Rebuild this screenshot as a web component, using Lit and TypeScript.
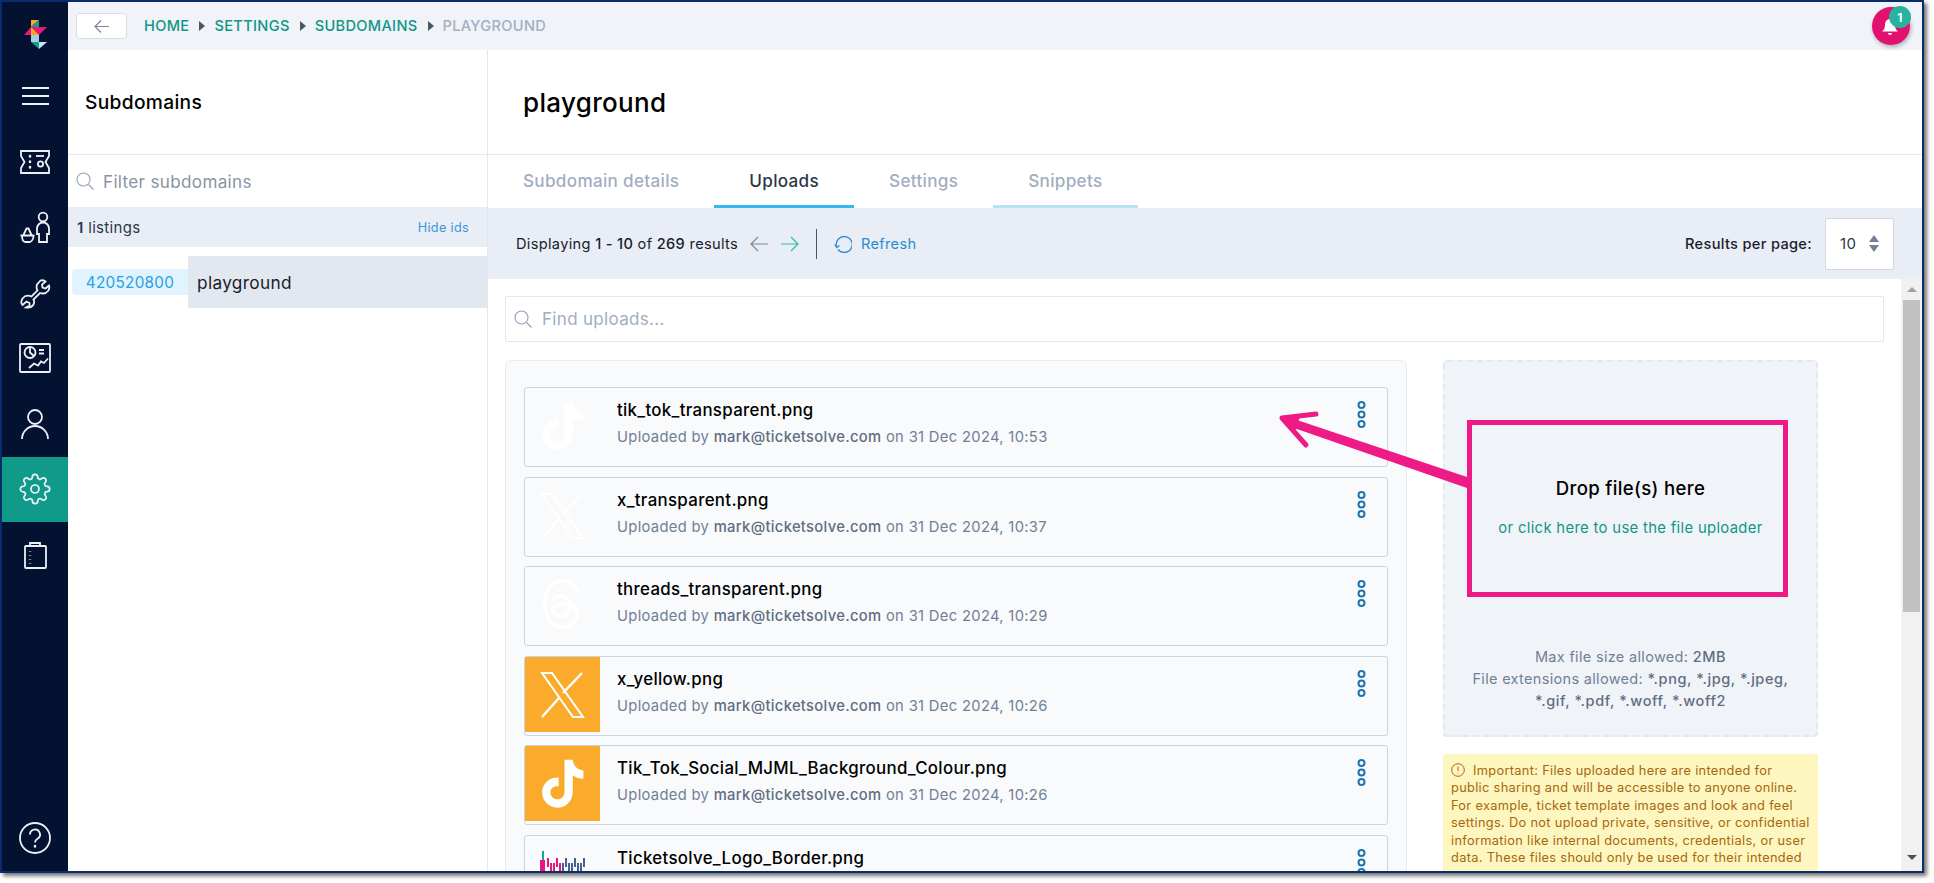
import { LitElement, html, css, svg } from 'lit';
import { customElement } from 'lit/decorators.js';

const uploads = [
  { name: 'tik_tok_transparent.png', when: '31 Dec 2024, 10:53', thumb: 'tiktok', solid: false },
  { name: 'x_transparent.png', when: '31 Dec 2024, 10:37', thumb: 'x', solid: false },
  { name: 'threads_transparent.png', when: '31 Dec 2024, 10:29', thumb: 'threads', solid: false },
  { name: 'x_yellow.png', when: '31 Dec 2024, 10:26', thumb: 'x', solid: true },
  { name: 'Tik_Tok_Social_MJML_Background_Colour.png', when: '31 Dec 2024, 10:26', thumb: 'tiktok', solid: true },
  { name: 'Ticketsolve_Logo_Border.png', when: '31 Dec 2024, 10:20', thumb: 'logo', solid: false },
];

const warning = [
  'public sharing and will be accessible to anyone online.',
  'For example, ticket template images and look and feel',
  'settings. Do not upload private, sensitive, or confidential',
  'information like internal documents, credentials, or user',
  'data. These files should only be used for their intended',
];

// little marks standing in for the tiny wordmark in the last thumbnail
const wordmark = [22, 25, 28, 31, 34, 37, 40, 43, 46, 49, 52, 55, 58].map(
  (x, i) => svg`<rect x=${x} y=${i % 3 === 0 ? 22 : 27} width="2" height="9" fill=${x < 36 ? '#e9177c' : '#46628f'} />`
);

const thumbs: Record<string, unknown> = {
  tiktok: svg`<path transform="translate(-6.500 -1.500) scale(1.180)" fill="#fff" d="M39 13h7c.6 5 3.600 8.400 9 9v7c-3.500 0-6.500-1-9-3v14c0 8-6 13.500-13 13.500S20 48 20 40.500 26.500 27.500 34 28v7.500c-3.500-.5-7 1.500-7 5s2.700 6 6 6 6-2.500 6-6.500z"/>`,
  x: svg`<path fill="none" stroke="#fff" stroke-width="2" d="M17 16h10l31 44H48z"/><path fill="none" stroke="#fff" stroke-width="2.500" d="M57 16 38 36M34 41 17 60"/>`,
  threads: svg`<path fill="none" stroke="#fff" stroke-width="4" d="M53 26c-2-8-8-12-16-12-11 0-17 9-17 23s6 23 17 23c9 0 15-5 15-12 0-8-7-11-15-11-6 0-9 3-9 6 0 4 4 6 8 6 6 0 9-4 9-9 0-7-4-11-9-11-3 0-6 1-7 4"/>`,
  logo: svg`<rect x="17" y="15" width="2" height="10" fill="#16a394"/><rect x="15" y="24" width="5" height="14" fill="#e9177c"/>${wordmark}`,
};

const navIcons: Record<string, unknown> = {
  ticket: svg`<path d="M2 5h28v5l-3.500 6 3.500 6v5H2v-5l3.500-6L2 10z"/><path d="M17 10h8"/><circle cx="21.500" cy="18" r="2.600"/><path d="M11 10v.5M11 15.500v.5M11 21v.5" stroke-width="2.500" stroke-linecap="round"/>`,
  basket: svg`<circle cx="24" cy="6" r="4.300"/><path d="M20 31v-8h-2v-5.500a6 6 0 0 1 12 0V23h-2v8z"/><path d="M1.500 24.500h14M3 24.500c0 3 1 6 3 6.500h5c2-.5 3.500-3.500 3.500-6.500M4.500 24l3-6.500h2l3 6.500"/>`,
  wrench: svg`<path d="M21.500 3.500 18 7.500c-1 3.500-.5 4.500.5 6l-6 6c-3.500-1.500-7-.5-9 2-1.500 2.500-1.500 5 0 6.500l4-3.500 3 1.500v2.500L7 30.500c3 .5 6-.5 7.500-3 1-2 .5-4 0-5L21 16c3 1 6 .5 8-2 1.500-2 1.500-4 1-5.500l-3.500 3-3-1-.5-3 3.500-3c-1.500-1-3.500-1.500-5-1z"/>`,
  chart: svg`<rect x="1" y="2" width="30" height="28" rx="1"/><circle cx="11" cy="10.500" r="5.500"/><path d="M11 5v5.500l4 3.500M20 8h5M20 11.500h5" /><path d="m10 26 5-4.500 4 2 3-4 3 1.500 4-4.500"/>`,
  person: svg`<circle cx="16" cy="9" r="7"/><path d="M3 31a13 13 0 0 1 26 0"/>`,
  clipboard: svg`<rect x="6" y="7" width="21" height="22" rx="1"/><path d="M11 7V4h10v3z"/><path d="M11 12.500v.5M11 16.500v.5M11 20.500v.5M11 24.500v.5" stroke-width="2.500"/>`,
  help: svg`<circle cx="16" cy="16" r="15"/><path d="M11 12.500a5 5 0 1 1 7.500 4.300c-1.700 1-2.500 2-2.500 3.700"/><path d="M16 24v.5" stroke-width="2.500" stroke-linecap="round"/>`,
};

const gearPath = 'M12 15a3 3 0 1 0 0-6 3 3 0 0 0 0 6zM19.400 15a1.650 1.650 0 0 0 .33 1.820l.06.06a2 2 0 0 1 0 2.830 2 2 0 0 1-2.830 0l-.06-.06a1.650 1.650 0 0 0-1.820-.33 1.650 1.650 0 0 0-1 1.510V21a2 2 0 0 1-2 2 2 2 0 0 1-2-2v-.09A1.650 1.650 0 0 0 9 19.400a1.650 1.650 0 0 0-1.820.33l-.06.06a2 2 0 0 1-2.830 0 2 2 0 0 1 0-2.830l.06-.06a1.650 1.650 0 0 0 .33-1.820 1.650 1.650 0 0 0-1.510-1H3a2 2 0 0 1-2-2 2 2 0 0 1 2-2h.09A1.650 1.650 0 0 0 4.600 9a1.650 1.650 0 0 0-.33-1.820l-.06-.06a2 2 0 0 1 0-2.830 2 2 0 0 1 2.830 0l.06.06a1.650 1.650 0 0 0 1.820.33H9a1.650 1.650 0 0 0 1-1.510V3a2 2 0 0 1 2-2 2 2 0 0 1 2 2v.09a1.650 1.650 0 0 0 1 1.510 1.650 1.650 0 0 0 1.820-.33l.06-.06a2 2 0 0 1 2.830 0 2 2 0 0 1 0 2.830l-.06.06a1.650 1.650 0 0 0-.33 1.820V9a1.650 1.650 0 0 0 1.510 1H21a2 2 0 0 1 2 2 2 2 0 0 1-2 2h-.09a1.650 1.650 0 0 0-1.510 1z';

const searchIcon = html`<svg class="search-icon" viewBox="0 0 18 18"><circle cx="7.500" cy="7.500" r="6.500"/><path d="m12.500 12.500 5 5"/></svg>`;

@customElement('app-root')
export class AppRoot extends LitElement {
  static styles = css`
    :host {
      display: block;
      width: 1934px;
      height: 883px;
      background: #fff;
      font-family: Inter, 'Noto Sans', sans-serif;
      letter-spacing: 0.02em;
      color: #1a202c;
    }
    .frame {
      position: relative;
      box-sizing: border-box;
      width: 1924px;
      height: 873px;
      border: 2px solid #0b2c6b;
      box-shadow: 3px 3px 4px rgba(0, 0, 0, 0.55);
      display: grid;
      grid-template-columns: 66px 1fr;
      background: #fff;
    }
    .side {
      background: #021230;
      display: flex;
      flex-direction: column;
      align-items: stretch;
    }
    .logo { height: 65px; display: flex; align-items: center; justify-content: center; }
    .logo svg { width: 23px; height: 29px; }
    .burger { height: 58px; display: flex; flex-direction: column; gap: 6px; align-items: center; justify-content: center; margin-bottom: 4px; }
    .burger i { display: block; width: 27px; height: 2px; background: #eef2f7; }
    .nav { height: 65.5px; display: flex; align-items: center; justify-content: center; }
    .nav.active { background: #0f9a8a; }
    .nav svg { width: 32px; height: 32px; fill: none; stroke: #edf1f6; stroke-width: 1.800; }
    .nav.gear svg { stroke-width: 1.300; }
    .help { margin-top: auto; height: 66px; }

    .page { display: grid; grid-template-rows: 48px 1fr; min-width: 0; min-height: 0; }
    .top { background: #f0f3f8; display: flex; align-items: center; padding-left: 8px; position: relative; }
    .back {
      box-sizing: border-box;
      width: 51px;
      height: 26px;
      background: #fff;
      border: 1px solid #d8dee8;
      border-radius: 4px;
      display: flex;
      align-items: center;
      justify-content: center;
      margin-right: 17px;
    }
    .back svg, .pager svg { fill: none; stroke: #7c8798; stroke-width: 1.200; }
    .back svg { width: 15px; height: 13px; }
    .crumb { font-size: 14.600px; font-weight: 500; color: #12968a; display: flex; align-items: center; }
    .crumb .last { color: #a3afc0; }
    .tri { width: 0; height: 0; border-left: 6px solid #4a5568; border-top: 5px solid transparent; border-bottom: 5px solid transparent; margin: 0 9px 0 10px; }
    .bell {
      position: absolute;
      right: 12px;
      top: 5px;
      width: 38px;
      height: 38px;
      border-radius: 50%;
      background: #e2106f;
      box-shadow: 1px 2px 4px rgba(0, 0, 0, 0.3);
    }
    .bell svg { position: absolute; left: 8px; top: 10px; width: 20px; height: 20px; fill: #fff; }
    .badge {
      position: absolute;
      right: -1px;
      top: -1px;
      width: 22px;
      height: 22px;
      border-radius: 50%;
      background: #26b39f;
      color: #fff;
      font-size: 12px;
      font-weight: 700;
      display: flex;
      align-items: center;
      justify-content: center;
    }

    .body { display: grid; grid-template-columns: 420px 1fr; min-height: 0; }
    .left { border-right: 1px solid #e2e8f0; }
    .head {
      box-sizing: border-box;
      height: 105px;
      border-bottom: 1px solid #e2e8f0;
      display: flex;
      align-items: center;
    }
    .left .head { padding-left: 17px; font-size: 19.200px; font-weight: 500; color: #000; }
    .filter { height: 52px; display: flex; align-items: center; padding-left: 8px; gap: 9px; font-size: 17.100px; color: #8a94a6; }
    .search-icon { width: 18px; height: 18px; flex: none; fill: none; stroke: #94a0b2; stroke-width: 1.100; }
    .count {
      height: 40px;
      background: #e9eef6;
      display: flex;
      align-items: center;
      justify-content: space-between;
      padding: 0 18px 0 9px;
      font-size: 15px;
      color: #2d3748;
    }
    .count b { font-weight: 600; }
    .count a { color: #3a96d8; font-size: 12.700px; }
    .sub-row { margin-top: 9px; height: 52px; display: flex; align-items: center; padding-left: 4px; }
    .sub-id {
      box-sizing: border-box;
      width: 116px;
      height: 26px;
      background: #e1f3fe;
      color: #2a9fe6;
      border-radius: 4px 0 0 4px;
      display: flex;
      align-items: center;
      justify-content: center;
      font-size: 15.250px;
    }
    .sub-name { flex: 1; height: 52px; background: #e2e8f0; display: flex; align-items: center; padding-left: 9px; font-size: 17.250px; color: #1a202c; }

    .main { display: grid; grid-template-rows: 105px 53px 71px 1fr; min-width: 0; min-height: 0; }
    .main .head { padding-left: 35px; font-size: 26px; font-weight: 500; color: #000; }
    .tabs { display: flex; }
    .tab {
      box-sizing: border-box;
      padding: 0 35px;
      height: 53px;
      display: flex;
      align-items: center;
      font-size: 17.100px;
      font-weight: 500;
      color: #a0aec0;
      border-bottom: 3px solid transparent;
    }
    .tab.on { color: #2d3748; border-bottom-color: #38b6f0; }
    .tab.soon { border-bottom-color: #b8e2f8; }
    .bar {
      background: #e9eef6;
      display: flex;
      align-items: center;
      padding: 0 28px 0 28px;
      font-size: 14.600px;
    }
    .bar b { font-weight: 500; }
    .pager { display: flex; gap: 13px; margin-left: 12px; }
    .pager svg { width: 18px; height: 16px; }
    .pager svg.next { stroke: #38b89a; }
    .rule { width: 1px; height: 30px; background: #4a5568; margin: 0 17px; }
    .refresh { display: flex; align-items: center; gap: 9px; color: #2a8ccc; }
    .refresh svg { width: 18px; height: 18px; fill: none; stroke: #2a8ccc; stroke-width: 1.300; }
    .per { margin-left: auto; display: flex; align-items: center; gap: 13px; font-weight: 500; }
    .select {
      box-sizing: border-box;
      width: 69px;
      height: 52px;
      background: #fff;
      border: 1px solid #d3d9e4;
      border-radius: 2px;
      display: flex;
      align-items: center;
      padding-left: 14px;
      gap: 13px;
      font-weight: 400;
      color: #2d3748;
      font-size: 15px;
    }
    .carets { display: flex; flex-direction: column; gap: 3px; }
    .carets i { width: 0; height: 0; border-left: 5.500px solid transparent; border-right: 5.500px solid transparent; }
    .carets i:first-child { border-bottom: 7px solid #718096; }
    .carets i:last-child { border-top: 7px solid #718096; }

    .content { display: grid; grid-template-columns: 1fr 21px; min-height: 0; overflow: hidden; }
    .scroll { padding: 17px 17px 0; min-width: 0; overflow: hidden; }
    .find {
      box-sizing: border-box;
      height: 46px;
      border: 1px solid #e2e8f0;
      border-radius: 2px;
      display: flex;
      align-items: center;
      padding-left: 8px;
      gap: 10px;
      font-size: 17px;
      color: #a0aec0;
    }
    .cols { display: grid; grid-template-columns: 902px 375px; gap: 36px; margin-top: 18px; align-items: start; }
    .list {
      box-sizing: border-box;
      background: #f8fafc;
      border: 1px solid #e7ebf2;
      border-radius: 6px;
      padding: 26px 18px;
      display: flex;
      flex-direction: column;
      gap: 9.500px;
    }
    .card {
      box-sizing: border-box;
      height: 80px;
      border: 1px solid #cbd5e0;
      border-radius: 3px;
      display: flex;
      padding: 0 14px 0 0;
    }
    .thumb { width: 75px; height: 75px; flex: none; }
    .thumb.solid { background: #fbab2b; }
    .info { margin-left: 17px; flex: 1; padding-top: 12px; }
    .name { font-size: 16.850px; font-weight: 500; color: #000; line-height: 20px; }
    .meta { font-size: 14.750px; color: #718096; line-height: 20px; margin-top: 7px; }
    .meta b { font-weight: 500; color: #5f6d82; }
    .kebab { width: 11px; height: 27px; margin: 13px 6px 0 0; fill: none; stroke: #1a75ae; stroke-width: 2; }

    .drop {
      box-sizing: border-box;
      height: 377px;
      background: #f0f3f8;
      border: 2px dashed #e2e8f0;
      border-radius: 4px;
      display: flex;
      flex-direction: column;
      align-items: center;
      text-align: center;
      padding-top: 113px;
    }
    .drop h3 { margin: 0; font-size: 18.600px; font-weight: 500; color: #000; line-height: 26px; }
    .drop a { margin-top: 16px; font-size: 14.850px; color: #12968a; line-height: 22px; }
    .limits { margin-top: 107px; font-size: 14.500px; line-height: 22px; color: #718096; width: 330px; }
    .limits b { font-weight: 500; color: #5f6d82; letter-spacing: 0.04em; }
    .warn {
      margin-top: 17px;
      background: #fdf6bf;
      border-radius: 2px;
      padding: 8px 0 40px 8px;
      font-size: 12.800px;
      line-height: 17.400px;
      color: #a8660e;
      white-space: nowrap;
    }
    .warn svg { width: 14px; height: 14px; vertical-align: -2px; margin-right: 8px; fill: none; stroke: #a8660e; stroke-width: 1; }

    .scrollbar { background: #f1f1f1; display: flex; flex-direction: column; align-items: center; padding-top: 8px; }
    .up, .down { width: 0; height: 0; border-left: 5px solid transparent; border-right: 5px solid transparent; }
    .up { border-bottom: 5px solid #a3a3a3; }
    .down { border-top: 5px solid #505050; margin-top: 243px; }
    .thumbbar { width: 17px; height: 312px; background: #c1c1c1; margin-top: 8px; }

    .mark { position: absolute; left: 0; top: 0; width: 1920px; height: 869px; pointer-events: none; }
  `;

  render() {
    return html`
      <div class="frame">
        <nav class="side">
          <div class="logo">
            <svg viewBox="24 20 23 29">
              <polygon points="31,20 39,20 31,27" fill="#f9a825" />
              <polygon points="39,20 39,27 31,27" fill="#11a08e" />
              <polygon points="24,35 31,27 47,27 39,35" fill="#e9177c" />
              <polygon points="31,27 39,35 31,35" fill="#f9a825" />
              <rect x="31" y="35" width="8" height="7" fill="#a6cfe3" />
              <polygon points="31,42 39,42 39,49" fill="#11a08e" />
              <polygon points="39,42 47,42 39,49" fill="#c9e4ef" />
            </svg>
          </div>
          <div class="burger"><i></i><i></i><i></i></div>
          <div class="nav"><svg viewBox="0 0 32 32">${navIcons.ticket}</svg></div>
          <div class="nav"><svg viewBox="0 0 32 32">${navIcons.basket}</svg></div>
          <div class="nav"><svg viewBox="0 0 32 32">${navIcons.wrench}</svg></div>
          <div class="nav"><svg viewBox="0 0 32 32">${navIcons.chart}</svg></div>
          <div class="nav"><svg viewBox="0 0 32 32">${navIcons.person}</svg></div>
          <div class="nav active gear"><svg viewBox="0 0 24 24"><path d=${gearPath} /></svg></div>
          <div class="nav"><svg viewBox="0 0 32 32">${navIcons.clipboard}</svg></div>
          <div class="nav help"><svg viewBox="0 0 32 32">${navIcons.help}</svg></div>
        </nav>

        <div class="page">
          <header class="top">
            <div class="back"><svg viewBox="0 0 15 13"><path d="M15 6.500H1M7 .5l-6 6 6 6" /></svg></div>
            <div class="crumb">
              <span>HOME</span><span class="tri"></span>
              <span>SETTINGS</span><span class="tri"></span>
              <span>SUBDOMAINS</span><span class="tri"></span>
              <span class="last">PLAYGROUND</span>
            </div>
            <div class="bell">
              <svg viewBox="0 0 20 20"><path d="M10 2c3 0 5 2.500 5 6 0 3 1 5 3 6.500H2C4 13 5 11 5 8c0-3.500 2-6 5-6zM8 16h4a2 2 0 0 1-4 0z" /></svg>
              <span class="badge">1</span>
            </div>
          </header>

          <div class="body">
            <aside class="left">
              <div class="head">Subdomains</div>
              <div class="filter">${searchIcon}<span>Filter subdomains</span></div>
              <div class="count"><span><b>1</b> listings</span><a>Hide ids</a></div>
              <div class="sub-row">
                <span class="sub-id">420520800</span>
                <span class="sub-name">playground</span>
              </div>
            </aside>

            <section class="main">
              <div class="head">playground</div>
              <div class="tabs">
                <div class="tab">Subdomain details</div>
                <div class="tab on">Uploads</div>
                <div class="tab">Settings</div>
                <div class="tab soon">Snippets</div>
              </div>
              <div class="bar">
                <span>Displaying <b>1 - 10</b> of <b>269</b> results</span>
                <span class="pager">
                  <svg viewBox="0 0 18 16"><path d="M18 8H1M8 1 1 8l7 7" /></svg>
                  <svg class="next" viewBox="0 0 18 16"><path d="M0 8h17M10 1l7 7-7 7" /></svg>
                </span>
                <span class="rule"></span>
                <span class="refresh">
                  <svg viewBox="0 0 18 18"><path d="M4 14.500a8 8 0 1 0-1.500-3" /><path d="m.8 9.500 2 3 2.700-2" /></svg>
                  Refresh
                </span>
                <span class="per">
                  Results per page:
                  <span class="select">10<span class="carets"><i></i><i></i></span></span>
                </span>
              </div>
              <div class="content">
                <div class="scroll">
                  <div class="find">${searchIcon}<span>Find uploads...</span></div>
                  <div class="cols">
                    <div class="list">
                      ${uploads.map(
                        (u) => html`
                          <div class="card">
                            <svg class="thumb ${u.solid ? 'solid' : ''}" viewBox="0 0 75 75">${thumbs[u.thumb]}</svg>
                            <div class="info">
                              <div class="name">${u.name}</div>
                              <div class="meta">Uploaded by <b>mark@ticketsolve.com</b> on ${u.when}</div>
                            </div>
                            <svg class="kebab" viewBox="0 0 11 27"><circle cx="5.500" cy="4" r="3" /><circle cx="5.500" cy="13.500" r="3" /><circle cx="5.500" cy="23" r="3" /></svg>
                          </div>
                        `
                      )}
                    </div>
                    <div>
                      <div class="drop">
                        <h3>Drop file(s) here</h3>
                        <a>or click here to use the file uploader</a>
                        <div class="limits">
                          Max file size allowed: <b>2MB</b><br />
                          File extensions allowed: <b>*.png, *.jpg, *.jpeg, *.gif, *.pdf, *.woff, *.woff2</b>
                        </div>
                      </div>
                      <div class="warn">
                        <svg viewBox="0 0 14 14"><circle cx="7" cy="7" r="6.300" /><path d="M7 3.500v4.500M7 9.800v.7" /></svg>Important: Files uploaded here are intended for
                        ${warning.map((line) => html`<br />${line}`)}
                      </div>
                    </div>
                  </div>
                </div>
                <div class="scrollbar">
                  <span class="up"></span>
                  <span class="thumbbar"></span>
                  <span class="down"></span>
                </div>
              </div>
            </section>
          </div>
        </div>

        <svg class="mark" viewBox="2 2 1920 869">
          <rect x="1469.500" y="422.500" width="316" height="172" fill="none" stroke="#ee1a85" stroke-width="5" />
          <polygon points="1467,477 1467,488 1294,428 1297,420" fill="#ee1a85" />
          <path d="M1316 414 1282 418 1306 445" fill="none" stroke="#ee1a85" stroke-width="5" stroke-linecap="round" stroke-linejoin="round" />
          <polygon points="1282,418 1300,416 1296,430" fill="#ee1a85" />
        </svg>
      </div>
    `;
  }
}
